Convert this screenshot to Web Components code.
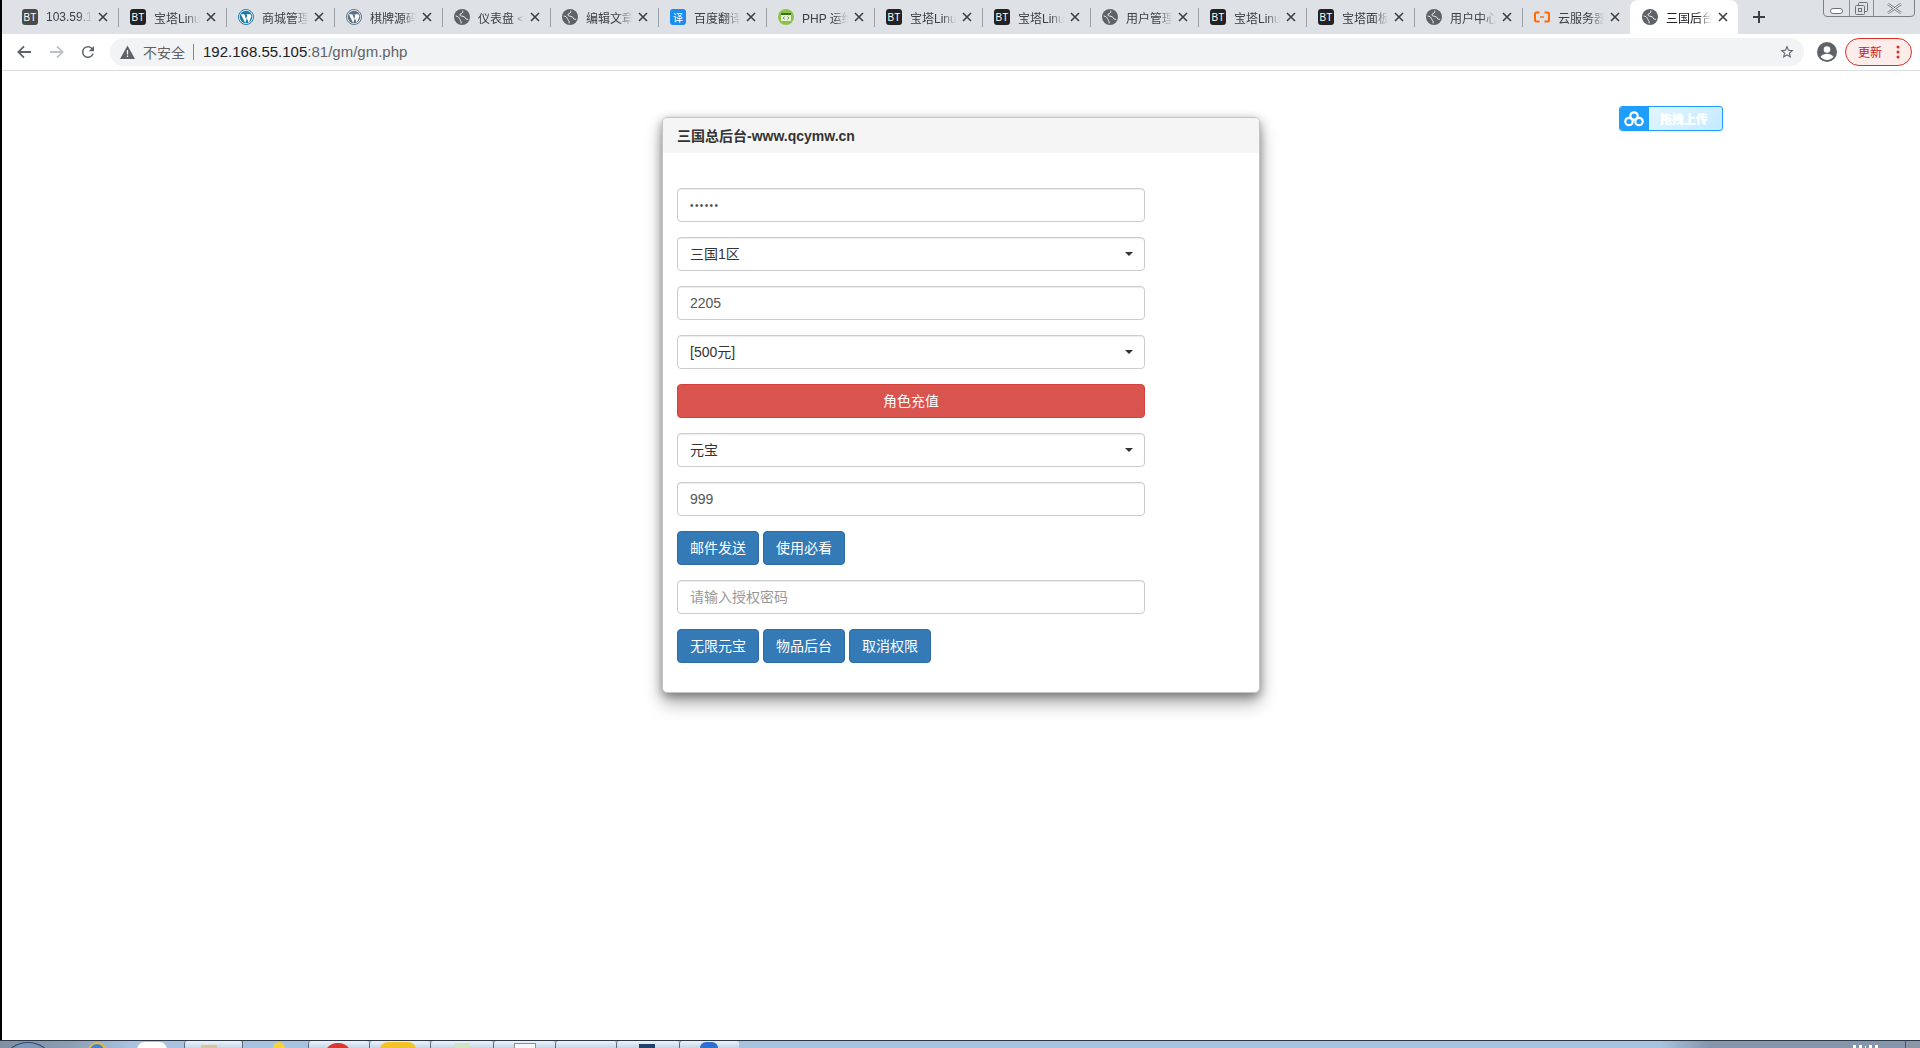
<!DOCTYPE html>
<html lang="zh-CN">
<head>
<meta charset="utf-8">
<title>三国总后台</title>
<style>
    html, body { margin: 0; height: 100%; overflow: hidden; background: #fff; }
    body {
        display: flex;
        flex-direction: column;
        height: 1048px;
        font-family: "Liberation Sans", "Noto Sans CJK SC", sans-serif;
        font-size: 14px;
        color: #333;
    }
    .window { flex: 1; display: flex; flex-direction: column; border-left: 2px solid #000; min-height: 0; }
</style>
</head>
<body>
<div class="window">
    <tab-strip>
        <browser-tab icon="bt-grey">103.59.1</browser-tab>
        <browser-tab icon="bt">宝塔Linux</browser-tab>
        <browser-tab icon="wp">商城管理</browser-tab>
        <browser-tab icon="wp-grey">棋牌源码</browser-tab>
        <browser-tab icon="globe">仪表盘 &lt;</browser-tab>
        <browser-tab icon="globe">编辑文章</browser-tab>
        <browser-tab icon="fanyi">百度翻译</browser-tab>
        <browser-tab icon="php">PHP 运维</browser-tab>
        <browser-tab icon="bt">宝塔Linux</browser-tab>
        <browser-tab icon="bt">宝塔Linux</browser-tab>
        <browser-tab icon="globe">用户管理</browser-tab>
        <browser-tab icon="bt">宝塔Linux</browser-tab>
        <browser-tab icon="bt">宝塔面板</browser-tab>
        <browser-tab icon="globe">用户中心</browser-tab>
        <browser-tab icon="aliyun">云服务器</browser-tab>
        <browser-tab icon="globe" active>三国后台</browser-tab>
    </tab-strip>
    <browser-toolbar></browser-toolbar>
    <page-main>
        <gm-panel heading="三国总后台-www.qcymw.cn">
            <gm-field secret>••••••</gm-field>
            <gm-field select>三国1区</gm-field>
            <gm-field>2205</gm-field>
            <gm-field select>[500元]</gm-field>
            <gm-button block kind="danger">角色充值</gm-button>
            <gm-field select>元宝</gm-field>
            <gm-field>999</gm-field>
            <gm-row>
                <gm-button>邮件发送</gm-button>
                <gm-button>使用必看</gm-button>
            </gm-row>
            <gm-field placeholder>请输入授权密码</gm-field>
            <gm-row last>
                <gm-button>无限元宝</gm-button>
                <gm-button>物品后台</gm-button>
                <gm-button>取消权限</gm-button>
            </gm-row>
        </gm-panel>
        <upload-badge>拖拽上传</upload-badge>
    </page-main>
</div>
<win-taskbar></win-taskbar>

<script>
const GLOBE = `<svg width="16" height="16" viewBox="0 0 16 16"><circle cx="8" cy="8" r="8" fill="#5f6368"/><path d="M1.800 7c2 .2 3 1 3.600 2.600s1.800 1.600 1.800 4.800M8.600 1.600c.8 1.500-.2 2.600-1.700 3.100s-1.400 2 .6 2.400 3.300.6 3.800 2 1.500 1.200 2.800 1.200" fill="none" stroke="#fff" stroke-width=".9"/></svg>`;
const wp = c => `<svg width="16" height="16" viewBox="0 0 16 16"><circle cx="8" cy="8" r="7.500" fill="#fff" stroke="${c}" stroke-width="1"/><circle cx="8" cy="8" r="6.300" fill="${c}"/><path d="M2.800 5.200h3.600l1.700 4.700 1-2.900-.6-1.800h4l1 1.800-2.700 7-1.900-4.800-1.700 4.800z" fill="#fff"/></svg>`;

const ICONS = {
    'bt': `<span class="sq" style="background:#222">BT</span>`,
    'bt-grey': `<span class="sq" style="background:#4a4a4a">BT</span>`,
    'fanyi': `<span class="sq" style="background:#1b8cf2">译</span>`,
    'globe': GLOBE,
    'wp': wp('#1f7aa8'),
    'wp-grey': wp('#5b7388'),
    'php': `<svg width="16" height="16" viewBox="0 0 16 16"><circle cx="8" cy="8" r="8" fill="#8bc34a"/><rect x="3" y="4" width="10" height="8" rx="1" fill="#e8f3d6"/><rect x="3" y="4" width="10" height="2" fill="#3f6b2a"/><path d="M6.500 7.500L5.300 9l1.200 1.500M9.500 7.500L10.700 9l-1.200 1.500" fill="none" stroke="#55703a" stroke-width=".8"/></svg>`,
    'aliyun': `<svg width="16" height="16" viewBox="0 0 16 16"><path d="M5.500 3.500H2.500q-1.500 0-1.500 1.500v6q0 1.500 1.500 1.500h3M10.500 3.500h3q1.500 0 1.500 1.500v6q0 1.500-1.500 1.500h-3" fill="none" stroke="#ff6a00" stroke-width="2"/><path d="M6 8h4" stroke="#ff6a00" stroke-width="1.400"/></svg>`
};

class TabStrip extends HTMLElement {
    constructor() {
        super();
        this.attachShadow({ mode: 'open' }).innerHTML = `
            <style>
                :host { display: flex; height: 34px; padding-left: 8px; background: #dee1e6; position: relative; flex: none; }
                .plus { width: 42px; display: flex; align-items: center; justify-content: center; }
                .win {
                    position: absolute; top: -1px; left: 1821px; width: 90px; height: 16px;
                    display: flex; border: 1px solid #7d8288; border-radius: 0 0 4px 4px; box-sizing: content-box;
                }
                .win div { display: flex; align-items: center; justify-content: center; border-right: 1px solid #8d9197; }
                .win div:last-child { border: 0; flex: 1; }
            </style>
            <slot></slot>
            <div class="plus"><svg width="14" height="14" viewBox="0 0 14 14"><path d="M7 1v12M1 7h12" stroke="#3c4043" stroke-width="2"/></svg></div>
            <div class="win">
                <div style="width:25px"><svg width="13" height="7" style="margin-top:6px"><rect x=".5" y=".5" width="12" height="5" rx="2.500" fill="#fff" stroke="#6d7278"/></svg></div>
                <div style="width:23px"><svg width="13" height="13"><rect x="3.500" y=".5" width="9" height="9" rx="1" fill="none" stroke="#6d7278"/><rect x=".5" y="3.500" width="9" height="9" rx="1" fill="#dee1e6" stroke="#6d7278"/><rect x="3.500" y="6.500" width="3" height="3" fill="none" stroke="#6d7278"/></svg></div>
                <div><svg width="15" height="11"><path d="M1 1l13 9M14 1L1 10" stroke="#6d7278" stroke-width="2.400"/><path d="M1 1l13 9M14 1L1 10" stroke="#fff" stroke-width="1"/></svg></div>
            </div>`;
    }
}

class BrowserTab extends HTMLElement {
    constructor() {
        super();
        const icon = ICONS[this.getAttribute('icon')] || GLOBE;
        this.attachShadow({ mode: 'open' }).innerHTML = `
            <style>
                :host { display: block; width: 108px; height: 34px; position: relative; box-sizing: border-box; font-size: 12px; color: #3c4043; }
                :host([active]) { background: #fff; border-radius: 8px 8px 0 0; color: #202124; }
                :host(:not([active]))::after {
                    content: ""; position: absolute; right: -1px; top: 8px; height: 19px; width: 1px; background: #9aa0a6;
                }
                :host(:nth-last-child(2))::after { display: none; }
                .in { display: flex; align-items: center; height: 34px; padding: 0 0 0 12px; }
                .ico { width: 16px; height: 16px; flex: none; display: block; margin-right: 8px; }
                .ico svg { display: block; }
                .sq {
                    display: flex; align-items: center; justify-content: center; width: 16px; height: 16px; border-radius: 3px;
                    color: #fff; font-size: 10px; font-family: "Liberation Sans", "Noto Sans CJK SC", sans-serif;
                }
                .title {
                    width: 46px; overflow: hidden; white-space: nowrap; flex: none;
                    -webkit-mask-image: linear-gradient(90deg, #000 70%, transparent 100%);
                    mask-image: linear-gradient(90deg, #000 70%, transparent 100%);
                }
                .x { margin-left: 6px; display: block; }
            </style>
            <div class="in">
                <span class="ico">${icon}</span>
                <span class="title"><slot></slot></span>
                <svg class="x" width="10" height="10" viewBox="0 0 10 10"><path d="M1 1l8 8M9 1l-8 8" stroke="#3c4043" stroke-width="1.600"/></svg>
            </div>`;
    }
}

class BrowserToolbar extends HTMLElement {
    constructor() {
        super();
        this.attachShadow({ mode: 'open' }).innerHTML = `
            <style>
                :host {
                    display: flex; align-items: center; height: 37px; box-sizing: border-box; flex: none;
                    background: #fff; border-bottom: 1px solid #dadce0; padding: 0 8px 1px 14px;
                }
                svg { display: block; flex: none; }
                .nav { display: flex; align-items: center; margin-right: 13px; }
                .nav svg:nth-child(2) { margin: 0 14px 0 17px; }
                .omni {
                    flex: 1; height: 28px; border-radius: 14px; background: #f1f3f4; display: flex; align-items: center;
                    padding: 0 9px 0 10px; font-size: 15px;
                }
                .warn { color: #5f6368; font-size: 14px; margin-left: 8px; }
                .sep { width: 1px; height: 16px; background: #80868b; margin: 0 9px 0 8px; }
                .host { color: #202124; }
                .path { color: #5f6368; }
                .grow { flex: 1; }
                .avatar { margin: 0 8px 0 13px; }
                .update {
                    width: 67px; height: 28px; box-sizing: border-box; border: 1px solid #d93025; border-radius: 14px;
                    background: #fcecea; color: #c5221f; font-size: 12px; display: flex; align-items: center; padding-left: 12px;
                }
                .dots { margin-left: 14px; }
            </style>
            <div class="nav">
                <svg width="16" height="16" viewBox="0 0 16 16"><path d="M15 8H2.500M8 2.300L2.300 8 8 13.700" fill="none" stroke="#5f6368" stroke-width="1.800"/></svg>
                <svg width="16" height="16" viewBox="0 0 16 16"><path d="M1 8h12.500M8 2.300L13.700 8 8 13.700" fill="none" stroke="#bdc1c6" stroke-width="1.800"/></svg>
                <svg width="18" height="18" viewBox="0 0 24 24"><path fill="#5f6368" d="M17.650 6.350A7.950 7.950 0 0 0 12 4a8 8 0 1 0 7.730 10h-2.080A6 6 0 1 1 12 6c1.660 0 3.140.69 4.220 1.780L13 11h7V4l-2.350 2.350z"/></svg>
            </div>
            <div class="omni">
                <svg width="15" height="14" viewBox="0 0 15 14"><path d="M7.500 .5L15 14H0z" fill="#5f6368"/><path d="M7.500 5v4.500M7.500 10.500v1.500" stroke="#f1f3f4" stroke-width="1.300"/></svg>
                <span class="warn">不安全</span><span class="sep"></span>
                <span class="host">192.168.55.105</span><span class="path">:81/gm/gm.php</span>
                <span class="grow"></span>
                <svg width="16" height="16" viewBox="0 0 24 24"><path fill="#5f6368" d="M22 9.240l-7.190-.62L12 2 9.190 8.630 2 9.240l5.460 4.730L5.820 21 12 17.270 18.180 21l-1.630-7.030L22 9.240zM12 15.400l-3.760 2.270 1-4.280-3.320-2.880 4.380-.38L12 6.100l1.710 4.040 4.380.38-3.320 2.880 1 4.280L12 15.400z"/></svg>
            </div>
            <svg class="avatar" width="20" height="20" viewBox="0 0 20 20"><circle cx="10" cy="10" r="10" fill="#5f6368"/><circle cx="10" cy="7.500" r="3.300" fill="#fff"/><path d="M3.500 14.800c1.400-2.200 4-3.100 6.500-3.100s5.100.9 6.500 3.100c-1.500 1.900-3.800 3.200-6.500 3.200s-5-1.300-6.500-3.200z" fill="#fff"/></svg>
            <div class="update"><span>更新</span>
                <svg class="dots" width="4" height="14" viewBox="0 0 4 14"><circle cx="2" cy="2" r="1.500" fill="#d93025"/><circle cx="2" cy="7" r="1.500" fill="#d93025"/><circle cx="2" cy="12" r="1.500" fill="#d93025"/></svg>
            </div>`;
    }
}

class PageMain extends HTMLElement {
    constructor() {
        super();
        this.attachShadow({ mode: 'open' }).innerHTML = `
            <style>
                :host { display: block; flex: 1; position: relative; padding: 46px 0 0 660px; min-height: 0; background: #fff; }
            </style>
            <slot></slot>`;
    }
}

class GmPanel extends HTMLElement {
    constructor() {
        super();
        this.attachShadow({ mode: 'open' }).innerHTML = `
            <style>
                :host {
                    display: block; width: 598px; height: 576px; box-sizing: border-box; background: #fff;
                    border: 1px solid #c4c4c4; border-radius: 5px;
                    box-shadow: 0 10px 18px rgba(0, 0, 0, .32), 0 3px 10px rgba(0, 0, 0, .35);
                }
                .head {
                    height: 35px; box-sizing: border-box; padding: 1px 14px 0; background: #f5f5f5; color: #333;
                    font-size: 14px; font-weight: bold; line-height: 35px; border-radius: 4px 4px 0 0;
                }
                .body { padding: 35px 14px 0; width: 468px; }
            </style>
            <div class="head">${this.getAttribute('heading')}</div>
            <div class="body"><slot></slot></div>`;
    }
}

class GmField extends HTMLElement {
    constructor() {
        super();
        const isSelect = this.hasAttribute('select');
        this.attachShadow({ mode: 'open' }).innerHTML = `
            <style>
                :host {
                    display: flex; align-items: center; justify-content: space-between; width: 468px; height: 34px;
                    box-sizing: border-box; margin-bottom: 15px; padding: 0 12px; background: #fff; color: #555;
                    border: 1px solid #ccc; border-radius: 4px; font-size: 14px;
                    box-shadow: inset 0 1px 1px rgba(0, 0, 0, .075);
                }
                :host([select]) { color: #333; padding-right: 11px; }
                :host([placeholder]) { color: #999; }
                :host([secret]) { font-size: 10px; letter-spacing: 1.400px; }
                /* the CJK fallback sits a pixel low in the line box */
                :host([select]) .txt, :host([placeholder]) .txt { padding-bottom: 2px; }
                .caret { width: 0; height: 0; border: 4px solid transparent; border-top-color: #333; border-bottom: 0; }
            </style>
            <span class="txt"><slot></slot></span>
            ${isSelect ? '<span class="caret"></span>' : ''}`;
    }
}

class GmRow extends HTMLElement {
    constructor() {
        super();
        this.attachShadow({ mode: 'open' }).innerHTML = `
            <style>
                :host { display: flex; gap: 4px; margin-bottom: 15px; }
            </style>
            <slot></slot>`;
    }
}

class GmButton extends HTMLElement {
    constructor() {
        super();
        this.attachShadow({ mode: 'open' }).innerHTML = `
            <style>
                :host {
                    display: inline-flex; align-items: center; justify-content: center; height: 34px; box-sizing: border-box;
                    padding: 0 12px 2px; color: #fff; font-size: 14px; border-radius: 4px;
                    background: #337ab7; border: 1px solid #2e6da4;
                }
                :host([block]) { display: flex; width: 468px; margin-bottom: 15px; }
                :host([kind="danger"]) { background: #d9534f; border-color: #d43f3a; }
            </style>
            <slot></slot>`;
    }
}

class UploadBadge extends HTMLElement {
    constructor() {
        super();
        this.attachShadow({ mode: 'open' }).innerHTML = `
            <style>
                :host {
                    position: absolute; left: 1617px; top: 35px; width: 104px; height: 25px; box-sizing: border-box;
                    display: flex; border: 1px solid #1e9fff; border-radius: 3px; overflow: hidden;
                    background: linear-gradient(135deg, #eaf8ff, #c4ebff);
                    color: #fff; font-size: 12px; font-weight: bold; text-shadow: 0 0 1px #fff;
                }
                .ico { width: 29px; padding-right: 2px; box-sizing: border-box; background: #1e9fff; display: flex; align-items: center; justify-content: center; flex: none; }
                .txt { flex: 1; display: flex; align-items: center; padding-left: 11px; }
            </style>
            <span class="ico"><svg width="20" height="16" viewBox="0 0 20 16"><g fill="none" stroke="#fff" stroke-width="2.200"><circle cx="10" cy="5" r="3.700"/><circle cx="5" cy="10.500" r="3.700"/><circle cx="15" cy="10.500" r="3.700"/></g></svg></span>
            <span class="txt"><slot></slot></span>`;
    }
}

class WinTaskbar extends HTMLElement {
    constructor() {
        super();
        // width, lit, then the bit of the icon that peeks over the screen edge
        const btns = [
            [58, 1, 'left:16px;width:16px;background:#d8c49a;top:4px'],
            [66, 0, 'left:30px;width:12px;background:#f5d33a;top:1px;border-radius:6px 6px 0 0'],
            [61, 1, 'left:16px;width:26px;background:#d8392f;top:2px;border-radius:13px 13px 0 0'],
            [61, 1, 'left:10px;width:36px;background:#f4c325;top:1px;border-radius:8px 8px 0 0'],
            [63, 1, 'left:24px;width:14px;background:#cfe7c0;top:2px'],
            [62, 1, 'left:20px;width:22px;background:#f4f6f8;border:1px solid #8a8f96;top:2px'],
            [61, 1, ''],
            [63, 1, 'left:22px;width:16px;background:#22406e;top:3px'],
            [60, 1, 'left:20px;width:18px;background:#2f6fd0;top:1px;border-radius:6px 6px 0 0']
        ];
        const html = btns.map(b => `<div class="btn${b[1] ? ' lit' : ''}" style="width:${b[0]}px">${b[2] ? `<i style="${b[2]}"></i>` : ''}</div>`).join('');
        this.attachShadow({ mode: 'open' }).innerHTML = `
            <style>
                :host {
                    display: flex; height: 8px; box-sizing: border-box; flex: none; position: relative; overflow: hidden;
                    border-top: 1px solid #2d3846;
                    background: linear-gradient(90deg, #7f90a5 0, #8b9db3 70px, #a8c3e0 130px, #a8c3e0 1660px, #8596ac 1710px, #8596ac 100%);
                }
                .start { width: 184px; flex: none; position: relative; }
                .orb { position: absolute; left: 6px; top: 1px; width: 42px; height: 30px; border-radius: 50%; border: 1px solid #2c4a6e; background: #7f98b5; }
                .ie { position: absolute; left: 88px; top: 1px; width: 14px; height: 14px; border-radius: 50%; border: 2px solid #e8b93a; background: #3f86d6; }
                .white { position: absolute; left: 137px; top: 1px; width: 30px; height: 20px; border-radius: 8px 8px 0 0; background: #fff; }
                .btn { position: relative; flex: none; box-sizing: border-box; border-left: 1px solid #5a6b80; }
                .lit { background: linear-gradient(#eef3f8, #c4d6e8); border-radius: 3px 3px 0 0; }
                i { position: absolute; height: 12px; display: block; box-sizing: border-box; }
                .show { position: absolute; right: 0; top: 0; width: 14px; height: 8px; background: #8a97a6; border-left: 1px solid #4a5666; }
                /* only the tops of the clock digits are on screen */
                .clock { position: absolute; left: 1853px; top: 4px; display: flex; gap: 3px; }
                .clock b { width: 3px; height: 3px; background: #fff; display: block; }
                .clock b:nth-child(3) { width: 1px; height: 2px; margin-top: 1px; }
            </style>
            <div class="start"><span class="orb"></span><span class="ie"></span><span class="white"></span></div>
            ${html}
            <span class="clock"><b></b><b></b><b></b><b></b><b></b></span>
            <span class="show"></span>`;
    }
}

customElements.define('tab-strip', TabStrip);
customElements.define('browser-tab', BrowserTab);
customElements.define('browser-toolbar', BrowserToolbar);
customElements.define('page-main', PageMain);
customElements.define('gm-panel', GmPanel);
customElements.define('gm-field', GmField);
customElements.define('gm-row', GmRow);
customElements.define('gm-button', GmButton);
customElements.define('upload-badge', UploadBadge);
customElements.define('win-taskbar', WinTaskbar);
</script>
</body>
</html>
